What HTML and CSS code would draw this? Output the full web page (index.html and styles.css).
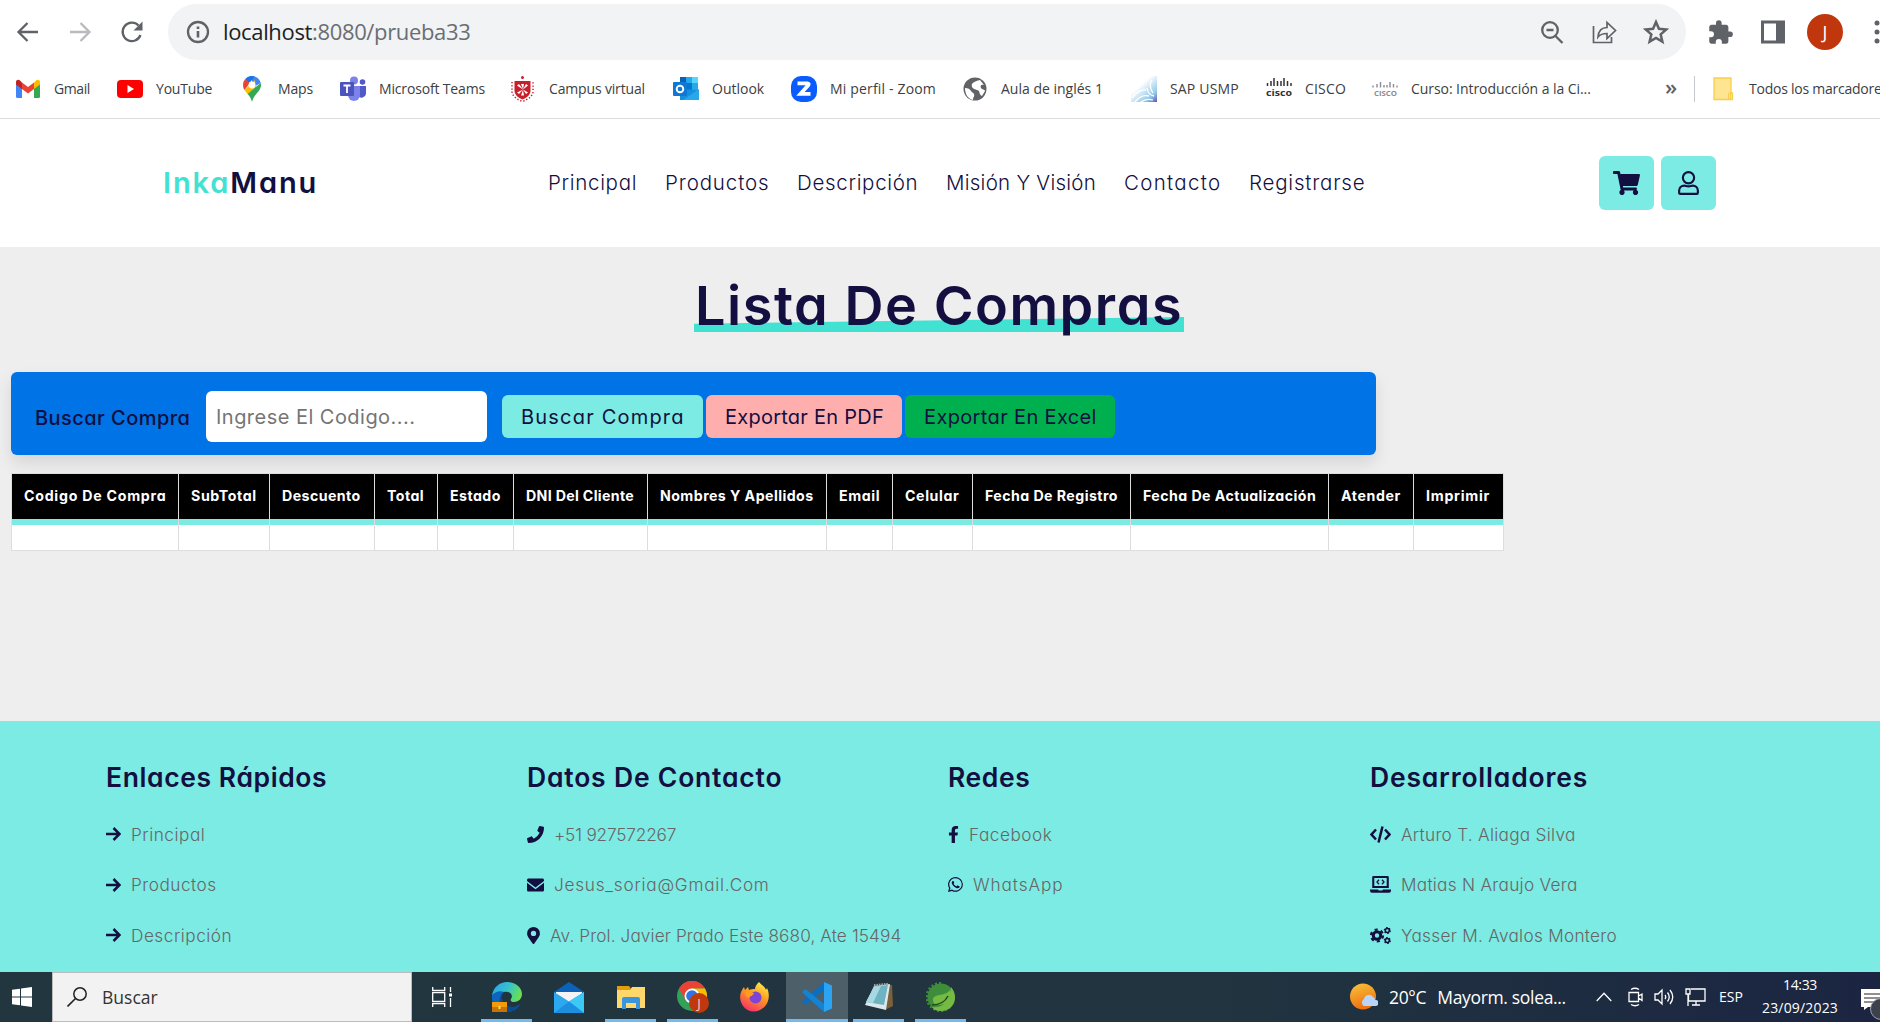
FILE: index.html
```html
<!DOCTYPE html>
<html lang="es">
<head>
<meta charset="utf-8">
<title>InkaManu - Lista de compras</title>
<link rel="stylesheet" href="styles.css">
</head>
<body>
<div class="toolbar">
  <div class="nav-buttons">
    <svg viewBox="0 0 24 24" width="24" height="24" class="ic"><path d="M22 12H3M11.500 3L2.500 12l9 9"/></svg>
    <svg viewBox="0 0 24 24" width="24" height="24" class="ic off"><path d="M2 12h19M12.500 3l9 9-9 9"/></svg>
    <svg viewBox="0 0 24 24" width="24" height="24" class="ic"><path d="M20.500 15A9.200 9.200 0 1 1 18.500 5.500"/><path d="M22.500 1.500v9h-9z" fill="#5f6368" stroke="none"/></svg>
  </div>
  <div class="omnibox">
    <svg viewBox="0 0 24 24" width="24" height="24" class="ic"><circle cx="12" cy="12" r="10"/><path d="M12 11v6.500M12 6.500v2.500" stroke-width="2.600"/></svg>
    <span class="url">localhost<span class="path">:8080/prueba33</span></span>
    <div class="omni-actions">
      <svg viewBox="0 0 26 26" width="26" height="26" class="ic"><circle cx="11" cy="11" r="7.800"/><path d="M16.500 17l7 7M7.500 11h7"/></svg>
      <svg viewBox="0 0 26 26" width="26" height="26" class="ic thin"><path d="M2.500 7v16.500h18V18"/><path d="M7 18c.5-6 4-9.500 9-9.500V3.500l8.500 8-8.500 8v-5c-4 0-7 1-9 3.500z"/></svg>
      <svg viewBox="0 0 24 24" width="26" height="26" class="ic"><path d="M12 2.800l2.700 6.300 6.800.6-5.200 4.500 1.600 6.700-5.900-3.500-5.900 3.500 1.600-6.700L2.500 9.700l6.800-.6z"/></svg>
    </div>
  </div>
  <div class="chrome-actions">
    <svg viewBox="0 0 24 24" width="27" height="27"><path fill="#5f6368" d="M20.500 11H19V7c0-1.100-.9-2-2-2h-4V3.500a2.500 2.500 0 0 0-5 0V5H4c-1.100 0-2 .9-2 2v3.800h1.500a2.700 2.700 0 0 1 0 5.400H2V20c0 1.100.9 2 2 2h3.800v-1.500a2.700 2.700 0 0 1 5.400 0V22H17c1.100 0 2-.9 2-2v-4h1.500a2.500 2.500 0 0 0 0-5z"/></svg>
    <svg viewBox="0 0 24 24" width="24" height="24"><path fill="#5f6368" fill-rule="evenodd" d="M0 .5h24v23H0zM3 3.500v17h12v-17z"/></svg>
    <span class="avatar">J</span>
    <svg viewBox="0 0 6 24" width="6" height="24"><g fill="#5f6368"><circle cx="3" cy="3" r="2.500"/><circle cx="3" cy="12" r="2.500"/><circle cx="3" cy="21" r="2.500"/></g></svg>
  </div>
</div>
<div class="bookmarks">
  <div class="bm"><svg viewBox="0 0 26 26"><path d="M1 6v14.500q0 1.500 1.500 1.500H7V12z" fill="#4285f4"/><path d="M25 6v14.500q0 1.500-1.500 1.500H19V12z" fill="#34a853"/><path d="M19 6.500V13l6-4.500V6c0-2-2.500-3-4-1.500z" fill="#fbbc04"/><path d="M1 6v2.500L7 13V6.500L5 4.500C3.500 3 1 4 1 6z" fill="#c5221f"/><path d="M7 6.500l6 4.500 6-4.500V13l-6 4.500L7 13z" fill="#ea4335"/></svg><span>Gmail</span></div>
  <div class="bm"><svg viewBox="0 0 26 26"><rect y="4" width="26" height="18" rx="4" fill="#f00"/><path d="M10.500 9v8l6.500-4z" fill="#fff"/></svg><span>YouTube</span></div>
  <div class="bm"><svg viewBox="0 0 26 26"><path d="M13 0a9 9 0 0 1 8.800 7L13 12z" fill="#4285f4"/><path d="M6 3.200A9 9 0 0 1 15.500.4L10 8z" fill="#1a73e8"/><path d="M4 9q0-3.500 2-5.800L11 7l-5.500 7Q4 12 4 9z" fill="#ea4335"/><path d="M5.500 14L16 4l1 8-8.500 6z" fill="#fbbc04"/><path d="M21.800 7C23.500 15 15 17 13 26c-1-4-2.500-6-4.500-8z" fill="#34a853"/><circle cx="13" cy="9" r="3.400" fill="#fff"/></svg><span>Maps</span></div>
  <div class="bm"><svg viewBox="0 0 26 26"><circle cx="14" cy="4.500" r="4" fill="#7b83eb"/><circle cx="22.500" cy="6" r="2.800" fill="#5059c9"/><path d="M18 10h8v8a4.500 4.500 0 0 1-8 2z" fill="#5059c9"/><path d="M8 10h12v9a6 6 0 0 1-12 0z" fill="#7b83eb"/><rect y="6" width="14" height="14" rx="1" fill="#4b53bc"/><path d="M3.500 9.500h7M7 9.500V17" stroke="#fff" stroke-width="1.800"/></svg><span>Microsoft Teams</span></div>
  <div class="bm"><svg viewBox="0 0 26 26"><path d="M4.500 5h16v10q0 5-8 8.500-8-3.500-8-8.500z" fill="#c8202a"/><circle cx="12.500" cy="1.500" r="1.500" fill="#c8202a"/><path d="M11 8h3l-1 5zM11 19.500h3L13 14zM7 9.500l2-1.500 4 5.500zM18 9.500L16 8l-3 5.500zM7 16.500l2 1.500 4-4.500zM18 16.500L16 18l-3-4.500z" fill="#fff"/><path d="M2 6v10q1 6 10.500 9.500Q22 22 23 16V6" fill="none" stroke="#c8202a" stroke-width="1.500" stroke-dasharray="1.300 1.900"/></svg><span>Campus virtual</span></div>
  <div class="bm"><svg viewBox="0 0 26 26"><path d="M7 1h18v14H7z" fill="#28a8ea"/><path d="M7 1h6v6H7z" fill="#0364b8"/><path d="M19 1h6v6h-6z" fill="#50d9ff"/><path d="M13 7h6v7h-6z" fill="#0078d4"/><path d="M7 13l19 1v10H7z" fill="#1490df"/><path d="M26 13L10 24h16z" fill="#28a8ea"/><rect y="6" width="14" height="14" rx="1" fill="#0f78d4"/><circle cx="7" cy="13" r="3.300" fill="none" stroke="#fff" stroke-width="1.900"/></svg><span>Outlook</span></div>
  <div class="bm"><svg viewBox="0 0 26 26"><rect width="26" height="26" rx="10" fill="#0b5cff"/><path d="M6.500 7.300h10q2 .3.700 2L9.500 17.800h10" fill="none" stroke="#fff" stroke-width="3.800"/></svg><span>Mi perfil - Zoom</span></div>
  <div class="bm"><svg viewBox="0 0 26 26"><circle cx="13" cy="13" r="11.500" fill="#5f6368"/><path d="M3 12c3 0 5 1 6 3s2 1 3 3-1 3-1 6c-5-1-8-6-8-12zM10 8c1-2 4-3 8-4l4 5c-3-1-4 1-3 3s4 1 4 3l-3 5c-4-2-1-5-5-6s-6-3-5-6z" fill="#fff"/></svg><span>Aula de inglés 1</span></div>
  <div class="bm"><svg viewBox="0 0 26 26"><defs><linearGradient id="sap" x1=".2" y1=".1" x2="1" y2="1"><stop offset=".25" stop-color="#fff"/><stop offset=".75" stop-color="#8fc8ea"/><stop offset="1" stop-color="#6b4fb0"/></linearGradient></defs><path d="M0 0h26v26H0z" fill="url(#sap)"/><path d="M1 22q7-9 14-8M4 26q6-8 14-6M16 12q1 7 7 8M21 4q-4 6 1 13M10 26q5-4 12-2" stroke="#fff" fill="none" stroke-width="1.300"/></svg><span>SAP USMP</span></div>
  <div class="bm"><svg viewBox="0 0 26 26"><path d="M1.500 7v3M5 5v5M8 2v8M11.500 5v5M15 5v5M18 2v8M21.500 5v5M25 7v3" stroke="#333" stroke-width="1.500"/><text x="0" y="19.500" class="cisco" textLength="26" lengthAdjust="spacingAndGlyphs">cisco</text></svg><span>CISCO</span></div>
  <div class="bm"><svg viewBox="0 0 26 26"><path d="M1 9.500v2M5 8v3.500M8.500 6v5.500M12 9v2.500M15 9v2.500M18 6v5.500M21.500 8v3.500M25 9.500v2" stroke="#888c93" stroke-width="1.400"/><text x="2" y="20" class="cisco soft" textLength="23" lengthAdjust="spacingAndGlyphs">CISCO</text></svg><span>Curso: Introducción a la Ci...</span></div>
  <div class="more">»</div>
  <div class="all"><svg viewBox="0 0 20 24" width="20" height="24"><path d="M1 1h17v15h1.500v6.500H1z" fill="#ffe591" stroke="#f7cf4b" stroke-width="1.300"/><path d="M15.500 22v-5.500l2-1v6z" fill="#ffe591" stroke="#f7cf4b"/></svg><span>Todos los marcadores</span></div>
</div>

<header class="site-header">
  <a class="logo"><span>Inka</span>Manu</a>
  <nav>
    <a>Principal</a><a>Productos</a><a>Descripción</a><a>Misión Y Visión</a><a>Contacto</a><a>Registrarse</a>
  </nav>
  <div class="head-icons">
    <a><svg viewBox="0 0 576 512" width="27" height="24"><path fill="#130f40" d="M528 301l47-208c4-15-8-29-23-29H159l-9-45C148 8 138 0 126 0H24C11 0 0 11 0 24v16c0 13 11 24 24 24h70l70 343c-17 10-28 28-28 49 0 31 25 56 56 56s56-25 56-56c0-16-6-30-17-40h210c-11 10-17 24-17 40 0 31 25 56 56 56s56-25 56-56c0-22-13-41-32-50l6-26c3-15-8-29-24-29H218l-7-32h294c11 0 21-8 23-18z"/></svg></a>
    <a><svg viewBox="0 0 448 512" width="21" height="24"><path fill="none" stroke="#130f40" stroke-width="46" d="M224 24a120 120 0 1 1 0 240 120 120 0 1 1 0-240zM134 312c34 0 44 16 90 16s56-16 90-16c61 0 110 49 110 110v42c0 13-11 24-24 24H48c-13 0-24-11-24-24v-42c0-61 49-110 110-110z"/></svg></a>
  </div>
</header>

<main>
  <h1>Lista De Compras</h1>
  <form class="search-bar">
    <label>Buscar Compra</label>
    <div class="field">Ingrese El Codigo....</div>
    <a class="btn find">Buscar Compra</a><a class="btn pdf">Exportar En PDF</a><a class="btn excel">Exportar En Excel</a>
  </form>
  <table>
    <colgroup><col class="c1"><col class="c2"><col class="c3"><col class="c4"><col class="c5"><col class="c6"><col class="c7"><col class="c8"><col class="c9"><col class="c10"><col class="c11"><col class="c12"><col class="c13"></colgroup>
    <thead><tr><th class="wide">Codigo De Compra</th><th>SubTotal</th><th class="tight">Descuento</th><th class="tight">Total</th><th class="tight">Estado</th><th class="dni">DNI Del Cliente</th><th class="tight">Nombres Y Apellidos</th><th>Email</th><th>Celular</th><th class="tight">Fecha De Registro</th><th class="tight">Fecha De Actualización</th><th>Atender</th><th class="wide">Imprimir</th></tr></thead>
    <tbody><tr><td></td><td></td><td></td><td></td><td></td><td></td><td></td><td></td><td></td><td></td><td></td><td></td><td></td></tr></tbody>
  </table>
</main>

<footer>
  <section>
    <h3>Enlaces Rápidos</h3>
    <a><svg viewBox="0 0 15 16" width="15" height="16"><path class="ln" d="M0 8h13M7.500 2l6 6-6 6"/></svg>Principal</a>
    <a><svg viewBox="0 0 15 16" width="15" height="16"><path class="ln" d="M0 8h13M7.500 2l6 6-6 6"/></svg>Productos</a>
    <a><svg viewBox="0 0 15 16" width="15" height="16"><path class="ln" d="M0 8h13M7.500 2l6 6-6 6"/></svg>Descripción</a>
  </section>
  <section class="contact">
    <h3>Datos De Contacto</h3>
    <a class="phone"><svg viewBox="0 0 512 512" width="17" height="17"><path d="M493 25L389 1c-11-3-23 3-27 14l-48 112c-4 10-1 21 7 28l61 50a371 371 0 0 1-177 177l-50-61c-7-8-18-11-28-7L15 362c-11 4-17 16-14 27l24 104c3 11 12 19 24 19 256 0 463-207 463-463 0-12-8-21-19-24z"/></svg>+51 927572267</a>
    <a class="mail"><svg viewBox="0 0 17 14" width="17" height="14"><path d="M1.600.5h13.800c.9 0 1.600.7 1.600 1.600v1L8.500 9.500 0 3.100v-1C0 1.200.7.500 1.600.500zM0 4.800l8.500 6.500L17 4.800v7.100c0 .9-.7 1.600-1.600 1.600H1.600c-.9 0-1.600-.7-1.600-1.600z"/></svg>Jesus_soria@Gmail.Com</a>
    <a class="address"><svg viewBox="0 0 384 512" width="13" height="17"><path fill-rule="evenodd" d="M172 502C27 291 0 270 0 192a192 192 0 0 1 384 0c0 78-27 99-172 310-10 13-30 13-40 0zm20-230a80 80 0 1 0 0-160 80 80 0 0 0 0 160z"/></svg>Av. Prol. Javier Prado Este 8680, Ate 15494</a>
  </section>
  <section>
    <h3>Redes</h3>
    <a><svg viewBox="0 0 320 512" width="11" height="17"><path d="M279 288l14-93h-89v-60c0-25 13-50 53-50h40V7s-37-7-72-7c-73 0-121 44-121 125v70H23v93h81v224h100V288z"/></svg>Facebook</a>
    <a class="whatsapp"><svg viewBox="0 0 448 512" width="15" height="17"><path fill-rule="evenodd" d="M381 97A222 222 0 0 0 31 365L0 480l118-31A222 222 0 0 0 381 97zM224 439c-33 0-66-9-94-26l-7-4-70 18 19-68-4-7A184 184 0 0 1 355 124c35 35 56 81 56 131 0 101-86 184-187 184zm101-138c-5-3-33-16-38-18s-9-3-12 3-14 18-18 22-7 4-12 1c-33-16-54-29-76-66-6-10 6-9 16-31 2-4 1-7 0-9l-17-42c-5-11-9-9-13-9-10-1-17 0-24 7-7 8-20 20-20 48s20 55 23 59c3 3 40 61 97 86 54 22 59 17 78 11 12-4 33-14 37-27 8-23 5-30-21-35z"/></svg>WhatsApp</a>
  </section>
  <section class="team">
    <h3>Desarrolladores</h3>
    <a><svg viewBox="0 0 21 17" width="21" height="17"><path class="ln" d="M6 3.500l-4.500 5 4.500 5M15 3.500l4.500 5-4.500 5M12.500.5l-4 16"/></svg>Arturo T. Aliaga Silva</a>
    <a><svg viewBox="0 0 21 17" width="21" height="17"><path fill-rule="evenodd" d="M3.500 0h14q1.300 0 1.300 1.300V12H2.200V1.300Q2.200 0 3.500 0zM4.300 2v8h12.400V2zM0 13.500h8q.5 1 1 1h3q.5 0 1-1h8v1.200q0 2-2 2H2q-2 0-2-2z"/><path class="ln fine" d="M9 3.800L7 6l2 2.200M12 3.800L14 6l-2 2.200"/></svg>Matias N Araujo Vera</a>
    <a><svg viewBox="0 0 21 17" width="21" height="17"><circle cx="7" cy="8.500" r="3.700" fill="none" stroke="#130f40" stroke-width="3"/><circle cx="7" cy="8.500" r="6" fill="none" stroke="#130f40" stroke-width="2.200" stroke-dasharray="3.140"/><circle cx="17.300" cy="3.500" r="2" fill="none" stroke="#130f40" stroke-width="1.600"/><circle cx="17.300" cy="3.500" r="3" fill="none" stroke="#130f40" stroke-width="1.200" stroke-dasharray="1.570"/><circle cx="17.300" cy="13.500" r="2" fill="none" stroke="#130f40" stroke-width="1.600"/><circle cx="17.300" cy="13.500" r="3" fill="none" stroke="#130f40" stroke-width="1.200" stroke-dasharray="1.570"/></svg>Yasser M. Avalos Montero</a>
  </section>
</footer>

<div class="taskbar">
  <div class="start"><svg viewBox="0 0 20 20" width="20" height="20"><path fill="#fff" d="M0 2.800L8 1.700v7.800H0zM9 1.500L20 0v9.500H9zM0 10.500h8v7.800l-8-1.100zM9 10.500h11V20L9 18.500z"/></svg></div>
  <div class="search"><svg viewBox="0 0 20 20" width="20" height="20"><circle cx="13" cy="7" r="6.200" fill="none" stroke="#222" stroke-width="1.500"/><path d="M8.500 11.500L.5 19.500" stroke="#222" stroke-width="1.600"/></svg><span>Buscar</span></div>
  <div class="task view"><svg viewBox="0 0 20 20" width="20" height="20" fill="none" stroke="#fff" stroke-width="1.300"><path d="M.7 0v3.500h12V0M.7 20v-3.500h12V20M.7 5.700h12v8.600H.7zM18.500 0v5M18.500 11v9"/><path d="M17 6.500h3v3h-3z" fill="#fff" stroke="none"/></svg></div>
  <div class="task on"><svg viewBox="0 0 30 30" width="30" height="32"><defs><linearGradient id="ed" x1="0" y1=".2" x2="1" y2=".5"><stop stop-color="#2aa5e8"/><stop offset=".5" stop-color="#35c1d0"/><stop offset="1" stop-color="#6be04c"/></linearGradient></defs><path d="M0 14C1 5 8 0 15 0c9 0 15 6 15 12 0 5-4 8-8 8-3 0-4-2-3-3 3-5-2-8-7-7C6 10 1 12 0 14z" fill="url(#ed)"/><path d="M0 14c2-4 8-6 12-4-4 3-5 10 0 15 5 4 12 2 16-3-2 5-7 8-13 8C6 30-1 23 0 14z" fill="#0c66c0"/><path d="M12 10c-4 4-3 14 8 15 3 0 6-2 8-3-3 7-9 8-13 8-7-1-11-14-3-20z" fill="#0b4b8f"/><path d="M0 20h15v10H0z" fill="#c8720a"/><path d="M0 20h15v5H0z" fill="#f59b0b"/><path d="M6.500 24h2v3h-2z" fill="#ffe14d"/></svg></div>
  <div class="task"><svg viewBox="0 0 30 31" width="30" height="31"><path d="M0 10L15 0l15 10v3H0z" fill="#0b62b8"/><path d="M2 10h26v10H2z" fill="#f4f4f6"/><path d="M0 10l15 9.500L30 10v21H0z" fill="#2ba8ee"/><path d="M30 10v21L15 19.500z" fill="#3cc9f5"/><path d="M0 31l15-11.500L30 31z" fill="#1c8fe0"/></svg></div>
  <div class="task on"><svg viewBox="0 0 28 24" width="28" height="24"><path d="M0 1h12l2 3-2 3H0z" fill="#e59e0b"/><path d="M0 5h13l2-3h13v21H0z" fill="#fed86a"/><path d="M5 24V14q0-2 2-2h14q2 0 2 2v10h-4v-6H9v6z" fill="#3a95dd"/></svg></div>
  <div class="task on"><svg viewBox="0 0 32 32" width="32" height="32"><circle cx="15" cy="15" r="15" fill="#34a05a"/><path d="M2 7.500A15 15 0 0 1 28 7.500H15L8.500 19z" fill="#ea4335"/><path d="M28 7.500A15 15 0 0 1 15 30l6.500-11.500L15 7.500z" fill="#fbbc04"/><circle cx="15" cy="15" r="7.500" fill="#fff"/><circle cx="15" cy="15" r="5.800" fill="#2f75e8"/><circle cx="22" cy="22" r="10" fill="#c0380e"/><text x="22" y="27" class="badge">J</text></svg></div>
  <div class="task"><svg viewBox="0 0 30 30" width="30" height="30"><defs><linearGradient id="ff" x1=".8" y1="0" x2=".3" y2="1"><stop stop-color="#fff04a"/><stop offset=".45" stop-color="#ff9a1e"/><stop offset="1" stop-color="#f6306a"/></linearGradient></defs><path d="M19 0c2 3 6 4 7 8l1-2c3 6 2 13-1 17-6 8-17 9-23 1-4-6-4-13 1-19l1 3 3-3 1 3c2-1 4-1 6-1 0-3 2-5 4-7z" fill="url(#ff)"/><circle cx="15.500" cy="15.500" r="6" fill="#7a45d8"/><path d="M5 10c3-2 6 0 9 1-1 3-4 3-5 5-2 0-4-3-4-6z" fill="#ff9c1a"/></svg></div>
  <div class="task on active"><svg viewBox="0 0 30 30" width="30" height="30"><path d="M22 0v8L4 22.500l-1.500-.300L.5 20.500v-1.300z" fill="#0a6fc0"/><path d="M.5 10.700v-1.200L3 7.500h1.200L22 22v8z" fill="#1583d3"/><path d="M22 0l8 3.500v23L22 30z" fill="#2ba4f3"/></svg></div>
  <div class="task on"><svg viewBox="0 0 28 28" width="28" height="28"><path d="M24 2h3l1 21-8 4z" fill="#7a6138"/><path d="M9 3L25 1l-4 26-21-5z" fill="#dbe9ee"/><path d="M9 4l14-2-4 20L1 19z" fill="#6db3c2"/><path d="M9 4l7-1-8 17-7-1z" fill="#a7d9e2"/><path d="M9 2.500L24 1" stroke="#aaa" stroke-width="2.500" stroke-dasharray="1.500 1"/></svg></div>
  <div class="task on"><svg viewBox="0 0 30 30" width="30" height="30"><circle cx="15" cy="15" r="13.500" fill="#3f8d3a"/><path d="M15 1.200A13.800 13.800 0 1 0 24 25" fill="none" stroke="#3f8d3a" stroke-width="2.400" stroke-dasharray="2 2"/><path d="M25 5c8 9 4 24-10 24-4 0-7-1-9-4 10 1 17-3 19-20z" fill="#75bb43"/><path d="M24 8c1 9-2 15-12 15-3 0-5-2-5-5 0-7 12-3 17-10z" fill="#75bb43"/><path d="M6 23c7 0 13-3 16-9" fill="none" stroke="#234b1d" stroke-width="1.500"/></svg></div>
  <div class="weather"><svg viewBox="0 0 28 28" width="28" height="28"><defs><linearGradient id="su" x1="0" y1="0" x2=".3" y2="1"><stop stop-color="#f7c63c"/><stop offset="1" stop-color="#f0700f"/></linearGradient></defs><circle cx="13" cy="13.500" r="13" fill="url(#su)"/><path d="M14 23a4 4 0 0 1 0-7 5 5 0 0 1 9-2c2 1 2 2 2 3a3 3 0 0 1 1 6z" fill="#b9d4fa"/></svg><span>20°C</span><span>Mayorm. solea...</span></div>
  <div class="tray">
    <svg viewBox="0 0 16 10" width="16" height="10"><path d="M.7 9L8 1.200 15.300 9"/></svg>
    <svg viewBox="0 0 16 20" width="16" height="20"><path d="M1 5.500h9.500v9H1zM10.500 9l3.500-2v6.500L10.500 11M3 2.500Q7 0 11 2.500M3 17.500Q7 20 11 17.500"/></svg>
    <svg viewBox="0 0 21 20" width="21" height="20"><path d="M1 7h3l4-4v14l-4-4H1zM11 8q1.500 2 0 4M13.500 5.500q3.500 4.500 0 9M16 3q5.500 7 0 14"/></svg>
    <svg viewBox="0 0 21 20" width="21" height="20"><path d="M6 2h14v12H3.500V8M1 2h4v5H1zM11 14v4M7 18h8M3 7v12"/></svg>
  </div>
  <div class="lang">ESP</div>
  <div class="clock"><span class="time">14:33</span><span>23/09/2023</span></div>
  <div class="notif"><svg viewBox="0 0 20 34" width="20" height="34"><path d="M1 1h19v18H8l-4 3v-3H1z" fill="#fff"/><path d="M4 6h16M4 10h16M4 14h10" stroke="#222" stroke-width="1.200"/><circle cx="21" cy="21" r="10.500" fill="#3c424d" stroke="#9aa0a8"/></svg></div>
</div>
</body>
</html>
```
FILE: styles.css
```css
* { box-sizing: border-box; }
html, body { margin: 0; width: 1880px; height: 1022px; overflow: hidden; }
body { background: #eee; font-family: Inter, sans-serif; font-feature-settings: "cv11"; font-optical-sizing: none; color: #130f40; white-space: nowrap; }
svg { display: block; flex: none; }
a { color: inherit; text-decoration: none; }

/* Browser toolbar */
.toolbar { display: flex; align-items: center; height: 64px; background: #fff; font-family: "Open Sans", sans-serif; font-feature-settings: normal; }
.nav-buttons { display: flex; gap: 28px; width: 168px; padding-left: 16px; }
.ic { fill: none; stroke: #5f6368; stroke-width: 2.3; }
.ic.thin { stroke-width: 1.7; }
.ic.off { stroke: #b8babd; }
.omnibox { display: flex; align-items: center; width: 1518px; height: 56px; padding: 0 17px 0 18px; border-radius: 28px; background: #f1f3f4; }
.url { margin: -2px 0 0 13px; font-size: 22px; letter-spacing: -.35px; color: #202124; }
.path { color: #6a6e73; }
.omni-actions { display: flex; gap: 26px; margin-left: auto; }
.chrome-actions { display: flex; align-items: center; width: 194px; padding-left: 21px; }
.chrome-actions svg:nth-child(2) { margin-left: 27px; }
.avatar { flex: none; width: 36px; height: 36px; margin: 0 31px 0 22px; border-radius: 50%; background: #c0370e; color: #fff; font-size: 18px; line-height: 36px; text-align: center; }

/* Bookmarks bar */
.bookmarks { display: grid; grid-template-columns: 102px 122px 101px 170px 163px 118px 171px 169px 135px 106px 293px 29px 186px; align-items: center; height: 55px; padding: 0 0 5px 15px; border-bottom: 1px solid #dadce0; background: #fff; font-family: "Open Sans", sans-serif; font-feature-settings: normal; font-size: 14px; color: #3c4043; }
.bm { display: flex; align-items: center; gap: 13px; }
.bm span, .all span { margin-top: -1px; }
.bm svg { width: 26px; height: 26px; }
.bm:nth-child(1) { letter-spacing: -.4px; }
.bm:nth-child(2) { letter-spacing: -.2px; }
.bm:nth-child(3), .bm:nth-child(4), .bm:nth-child(5) { letter-spacing: -.16px; }
.bm:nth-child(7), .bm:nth-child(9), .bm:nth-child(10) { letter-spacing: .17px; }
.bm:nth-child(11) { letter-spacing: -.06px; }
.cisco { font: 700 9px "Open Sans", sans-serif; fill: #333; letter-spacing: 0; }
.cisco.soft { font-size: 7px; fill: #888c93; }
.more { margin-top: -6px; font-size: 22px; font-weight: 600; line-height: 24px; color: #5f6368; }
.all { display: flex; align-items: center; gap: 16px; height: 26px; padding-left: 18px; border-left: 1px solid #c4c7cb; letter-spacing: -.24px; }

/* Site header */
.site-header { display: flex; align-items: center; height: 128px; padding: 0 164px 0 163px; background: #fff; }
.logo { width: 385px; margin-top: -1px; font-size: 29px; font-weight: 600; line-height: 40px; letter-spacing: 1.9px; }
.logo span { color: #41e2d2; }
nav { display: grid; grid-template-columns: 117px 132px 149px 178px 125px 116px; margin-top: -1px; font-size: 20.5px; font-weight: 350; letter-spacing: .68px; }
nav a:nth-child(2) { letter-spacing: .87px; }
nav a:nth-child(4) { letter-spacing: .26px; }
nav a:nth-child(5) { letter-spacing: 1.3px; }
nav a:nth-child(6) { letter-spacing: .79px; }
.head-icons { display: flex; gap: 7px; margin-left: auto; }
.head-icons a { display: flex; align-items: center; justify-content: center; width: 55px; height: 54px; border-radius: 6px; background: #7cebe3; }

/* Purchases */
main { height: 474px; padding-top: 27px; }
h1 { position: relative; z-index: 0; width: 490px; height: 58px; margin: 0 0 0 694px; padding-left: 1px; font-size: 54px; font-weight: 600; line-height: 64px; letter-spacing: 1.55px; }
h1::before { content: ""; position: absolute; z-index: -1; left: 0; right: 0; top: 43px; height: 15px; background: #41e2d2; clip-path: polygon(0 45%, 100% 0, 100% 100%, 0 100%); }
.search-bar { display: flex; align-items: center; width: 1365px; height: 83px; margin: 40px 0 0 11px; padding: 9px 0 0 24px; border-radius: 6px; background: #0073e6; box-shadow: 0 8px 16px rgba(0, 0, 0, .1); font-size: 20px; }
label { width: 171px; font-weight: 550; letter-spacing: .45px; }
.field { width: 281px; height: 51px; margin: -3px 15px 0 0; padding: 1px 0 0 10px; border-radius: 6px; background: #fff; color: #757575; line-height: 51px; letter-spacing: .47px; }
.btn { height: 43px; margin: -3px 3px 0 0; padding-left: 19px; border-radius: 6px; line-height: 44px; }
.find { width: 201px; background: #7cebe3; letter-spacing: 1.2px; }
.pdf { width: 196px; background: #ffaeae; letter-spacing: .25px; }
.excel { width: 210px; background: #00b04f; letter-spacing: .36px; }
table { width: 1493px; margin: 18px 0 0 11px; table-layout: fixed; border-spacing: 0; border-top: 1px solid #ddd; background: #fff; }
th, td { padding: 0; border-left: 1px solid #ddd; }
th:last-child, td:last-child { border-right: 1px solid #ddd; }
th { height: 45px; padding: 0 0 2px 12px; background: #000; color: #fff; font-size: 14.2px; font-weight: 650; letter-spacing: .6px; text-align: left; }
.wide { letter-spacing: .74px; }
.tight { letter-spacing: .43px; }
.dni { letter-spacing: .32px; }
td { height: 32px; border-bottom: 1px solid #ddd; }
tbody tr:first-child td { background: linear-gradient(#7cebe3 6px, #fff 6px); }
.c1 { width: 167px; } .c2 { width: 91px; } .c3 { width: 105px; } .c4 { width: 63px; } .c5 { width: 76px; }
.c6 { width: 134px; } .c7 { width: 179px; } .c8 { width: 66px; } .c9 { width: 80px; } .c10 { width: 158px; }
.c11 { width: 198px; } .c12 { width: 85px; } .c13 { width: 91px; }

/* Footer */
footer { display: grid; grid-template-columns: 421px 421px 422px 400px; height: 251px; padding: 36px 0 0 106px; background: #7cebe3; letter-spacing: .52px; }
h3 { margin: 0 0 19px; font-size: 26.5px; font-weight: 600; line-height: 40px; letter-spacing: .6px; }
.contact h3, .team h3 { letter-spacing: .8px; }
footer a { display: flex; align-items: center; gap: 10px; height: 36px; margin-bottom: 14.5px; font-size: 17.2px; font-weight: 320; color: #666; }
.phone { letter-spacing: -.15px; }
.mail { letter-spacing: .76px; }
.address { letter-spacing: .11px; }
.whatsapp { letter-spacing: .9px; }
.team a { letter-spacing: .29px; }
footer svg { fill: #130f40; }
.ln { fill: none; stroke: #130f40; stroke-width: 2.5; }
.ln.fine { stroke-width: 1.3; }

/* Taskbar */
.taskbar { display: flex; height: 50px; background: linear-gradient(90deg, #21363f, #21343f 65%, #1b2542); color: #fff; font-family: "Open Sans", sans-serif; font-feature-settings: normal; }
.start { display: flex; align-items: center; width: 52px; padding-left: 12px; }
.search { display: flex; align-items: center; gap: 15px; width: 360px; padding-left: 14px; border: 1px solid #bbb; background: #f2f2f2; color: #333; font-size: 17.5px; }
.task { display: flex; align-items: center; justify-content: center; width: 62px; background: linear-gradient(#76b9ed, #76b9ed) center bottom / 0 3px no-repeat; }
.on { background-size: 51px 3px; }
.view { width: 63.5px; padding-right: 3px; }
.active { background-color: #4d5f69; background-size: 100% 3px; }
.badge { font-size: 13px; fill: #f5d2c7; text-anchor: middle; }
.weather { display: flex; align-items: center; gap: 11px; width: 246px; margin-left: 378.5px; font-size: 17.5px; letter-spacing: -.33px; }
.tray { display: flex; align-items: center; gap: 10px; width: 123px; }
.tray svg { fill: none; stroke: #fff; stroke-width: 1.3; }
.tray svg:first-child { margin-right: 6px; }
.lang { width: 43px; font-size: 14px; line-height: 50px; }
.clock { display: flex; flex-direction: column; align-items: center; width: 76px; padding-top: 1px; font-size: 14px; line-height: 23px; letter-spacing: .17px; }
.time { letter-spacing: -.34px; }
.notif { display: flex; align-items: end; margin-left: 22px; }
```
